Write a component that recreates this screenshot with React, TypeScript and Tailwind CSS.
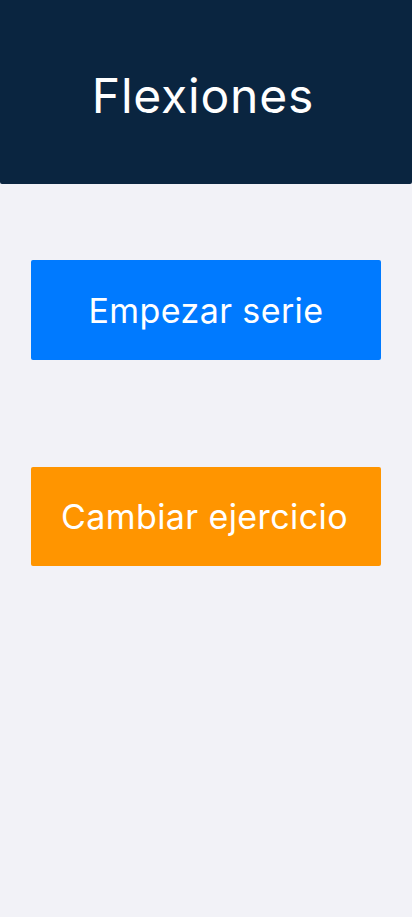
import React from 'react'

export default function App() {
  return (
    <div className="min-h-[917px] bg-[#f2f2f7] font-['Inter',sans-serif]">
      <div className="flex h-[184px] items-center justify-center rounded-b-[2px] bg-[#0a2540] pt-[8px] pr-[6px]">
        <h1 className="text-[48px] font-normal tracking-[0.8px] leading-none text-white">Flexiones</h1>
      </div>
      <div className="flex flex-col gap-[107px] px-[31px] pt-[76px]">
        <button className="flex h-[100px] w-[350px] items-center justify-center rounded-[2px] bg-[#007aff] text-[34px] font-normal tracking-[0.4px] text-white">
          Empezar serie
        </button>
        <button className="flex h-[99px] w-[350px] items-center justify-center rounded-[2px] bg-[#ff9500] pr-[3px] text-[34px] font-normal tracking-[0.4px] text-white">
          Cambiar ejercicio
        </button>
      </div>
    </div>
  )
}
